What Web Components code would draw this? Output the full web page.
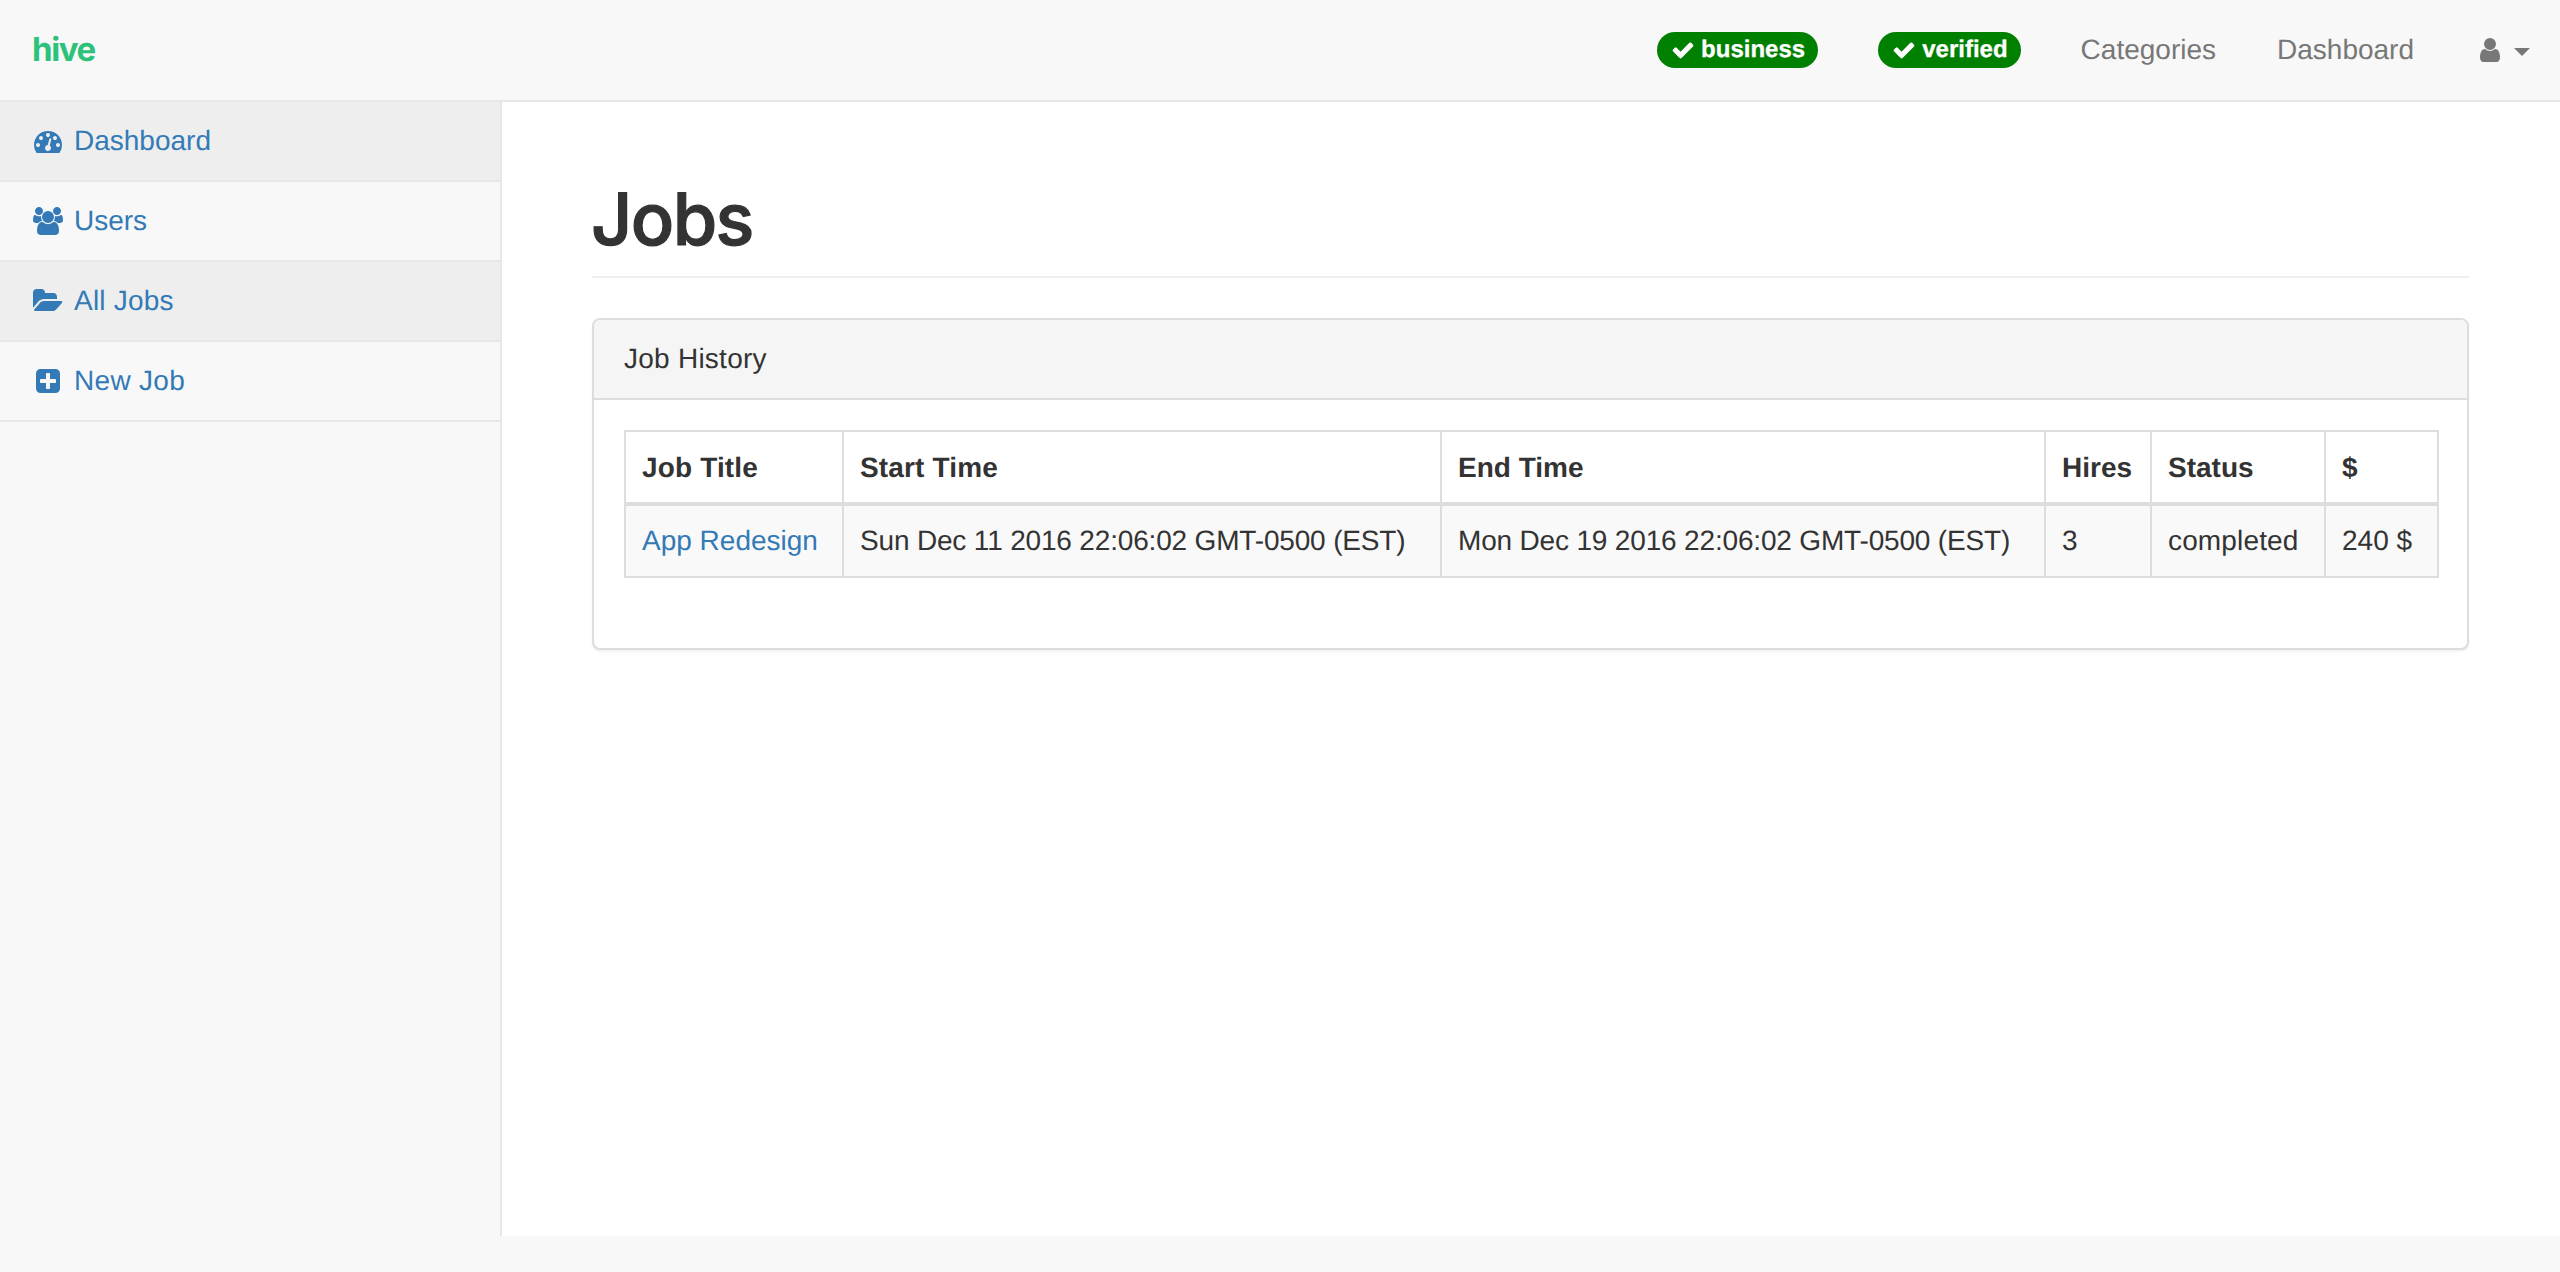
<!DOCTYPE html>
<html lang="en"><head><meta charset="utf-8"><title>Jobs</title>
<style>
html,body{margin:0;padding:0;background:#f8f8f8;font:28px/40px "Liberation Sans",Arial,sans-serif;color:#333;text-rendering:geometricPrecision}
</style></head><body>
<hive-app></hive-app>
<script>
const ICONS={
check:['0 0 1792 1792','M1671 566q0 40-28 68l-724 724-136 136q-28 28-68 28t-68-28l-136-136-362-362q-28-28-28-68t28-68l136-136q28-28 68-28t68 28l294 295 656-657q28-28 68-28t68 28l136 136q28 28 28 68z'],
user:['0 0 1792 1792','M1536 1399q0 109-62.5 187t-150.5 78h-854q-88 0-150.5-78t-62.5-187q0-85 8.5-160.5t31.5-152 58.5-131 94-89 134.5-34.5q131 128 313 128t313-128q76 0 134.5 34.5t94 89 58.5 131 31.5 152 8.5 160.5zm-256-887q0 159-112.5 271.5t-271.5 112.5-271.5-112.5-112.5-271.5 112.5-271.5 271.5-112.5 271.5 112.5 112.5 271.5z'],
dashboard:['0 0 1792 1792','M384 1152q0-53-37.5-90.5t-90.5-37.5-90.5 37.5-37.5 90.5 37.5 90.5 90.5 37.5 90.5-37.5 37.5-90.5zm192-448q0-53-37.5-90.5t-90.5-37.5-90.5 37.5-37.5 90.5 37.5 90.5 90.5 37.5 90.5-37.5 37.5-90.5zm428 481l101-382q6-26-7.5-48.5t-38.5-29.5-48 6.5-30 39.5l-101 382q-60 5-107 43.5t-63 98.5q-20 77 20 146t117 89 146-20 89-117q16-60-6-117t-72-91zm660-33q0-53-37.5-90.5t-90.5-37.5-90.5 37.5-37.5 90.5 37.5 90.5 90.5 37.5 90.5-37.5 37.5-90.5zm-640-640q0-53-37.5-90.5t-90.5-37.5-90.5 37.5-37.5 90.5 37.5 90.5 90.5 37.5 90.5-37.5 37.5-90.5zm448 192q0-53-37.5-90.5t-90.5-37.5-90.5 37.5-37.5 90.5 37.5 90.5 90.5 37.5 90.5-37.5 37.5-90.5zm320 448q0 261-141 483-19 29-54 29h-1402q-35 0-54-29-141-221-141-483 0-182 71-348t191-286 286-191 348-71 348 71 286 191 191 286 71 348z'],
users:['0 0 1920 1792','M593 896q-162 5-265 128h-134q-82 0-138-40.5t-56-118.5q0-353 124-353 6 0 43.5 21t97.5 42.5 119 21.5q67 0 133-23-5 37-5 66 0 139 81 256zm1071 637q0 120-73 189.5t-194 69.5h-874q-121 0-194-69.5t-73-189.5q0-53 3.5-103.5t14-109 26.5-108.5 43-97.5 62-81 85.5-53.5 111.5-20q10 0 43 21.5t73 48 107 48 135 21.5 135-21.5 107-48 73-48 43-21.5q61 0 111.5 20t85.5 53.5 62 81 43 97.5 26.5 108.5 14 109 3.5 103.5zm-1024-1277q0 106-75 181t-181 75-181-75-75-181 75-181 181-75 181 75 75 181zm704 384q0 159-112.5 271.5t-271.5 112.5-271.5-112.5-112.5-271.5 112.5-271.5 271.5-112.5 271.5 112.5 112.5 271.5zm576 225q0 78-56 118.5t-138 40.5h-134q-103-123-265-128 81-117 81-256 0-29-5-66 66 23 133 23 59 0 119-21.5t97.5-42.5 43.5-21q124 0 124 353zm-128-609q0 106-75 181t-181 75-181-75-75-181 75-181 181-75 181 75 75 181z'],
folder:['0 0 1920 1792','M1879 952q0 31-31 66l-336 396q-43 51-120.5 86.5t-143.5 35.5h-1088q-34 0-60.5-13t-26.5-43q0-31 31-66l336-396q43-51 120.5-86.5t143.5-35.5h1088q34 0 60.5 13t26.5 43zm-343-344v160h-832q-94 0-197 47.5t-164 119.5l-337 396-5 6q0-4-.5-12.5t-.5-12.5v-960q0-92 66-158t158-66h320q92 0 158 66t66 158v32h544q92 0 158 66t66 158z'],
plus:['0 0 1792 1792','M1408 960v-128q0-26-19-45t-45-19h-320v-320q0-26-19-45t-45-19h-128q-26 0-45 19t-19 45v320h-320q-26 0-45 19t-19 45v128q0 26 19 45t45 19h320v320q0 26 19 45t45 19h128q26 0 45-19t19-45v-320h320q26 0 45-19t19-45zm256-544v960q0 119-84.5 203.5t-203.5 84.5h-960q-119 0-203.5-84.5t-84.5-203.5v-960q0-119 84.5-203.5t203.5-84.5h960q119 0 203.5 84.5t84.5 203.5z']
};
function def(name,css,html){
  customElements.define(name,class extends HTMLElement{
    connectedCallback(){
      if(this.shadowRoot)return;
      const r=this.attachShadow({mode:'open'});
      const h=typeof html==='function'?html(this):html;
      r.innerHTML='<style>'+css+'</style>'+h;
    }
  });
}
def('fa-icon',':host{display:block;height:1em;line-height:0}svg{display:block;height:1em;width:auto;fill:currentColor}',
 el=>{const [vb,d]=ICONS[el.getAttribute('name')];return `<svg viewBox="${vb}" aria-hidden="true"><path d="${d}"/></svg>`});
def('status-badge',':host{display:inline-flex;align-items:center;height:36px;box-sizing:border-box;padding:0 13px 0 13.5px;border-radius:18px;background:#008000;color:#fff;font:bold 24px/36px "Liberation Sans",Arial,sans-serif;gap:6.6px;-webkit-text-stroke:.3px #fff}fa-icon{font-size:24px;-webkit-text-stroke:0}',
 '<fa-icon name="check"></fa-icon><slot></slot>');
def('top-link',':host{display:block;color:#777;font-size:28px;line-height:40px}','<slot></slot>');
def('hive-logo',':host{display:block;color:#2dc27b;font:700 33px/40px Inter,Lato,sans-serif;letter-spacing:-1.4px;padding-bottom:2px}','<slot></slot>');
def('user-menu',':host{display:flex;align-items:center;color:#777;gap:10px;margin-left:2px}fa-icon{font-size:28px}i{display:block;width:0;height:0;border-top:8px solid #777;border-left:8px solid transparent;border-right:8px solid transparent;margin-top:3px}',
 '<fa-icon name="user"></fa-icon><i></i>');
def('top-bar',':host{display:flex;align-items:center;box-sizing:border-box;height:102px;padding:0 30px 0 32px;background:#f8f8f8;border-bottom:2px solid #e7e7e7}.r{margin-left:auto;display:flex;align-items:center;gap:60px}',
 '<slot name="brand"></slot><div class="r"><slot></slot></div>');
def('side-item',':host{display:flex;align-items:center;box-sizing:border-box;height:80px;padding:0 0 0 30px;border-bottom:2px solid #e7e7e7;color:#337ab7}:host([active]){background:#eee}.i{width:36px;display:flex;justify-content:center;margin-right:8px}fa-icon{font-size:28px}',
 el=>`<span class="i"><fa-icon name="${el.getAttribute('icon')}"></fa-icon></span><slot></slot>`);
def('side-bar',':host{display:block;box-sizing:border-box;width:502px;flex:none;border-right:2px solid #e7e7e7;background:#f8f8f8}','<slot></slot>');
def('page-title',':host{display:block;padding-bottom:18px;border-bottom:2px solid #eee;margin-bottom:40px}h1{margin:0 0 0 -1px;font:500 72px/77px Inter,"Liberation Sans",Arial,sans-serif;color:#333;letter-spacing:-1.6px;-webkit-text-stroke:1.2px #333}','<h1><slot></slot></h1>');
def('info-panel',':host{display:block;border:2px solid #ddd;border-radius:8px;background:#fff;box-shadow:0 2px 2px rgba(0,0,0,.05)}.h{box-sizing:border-box;height:80px;padding:19px 30px;background:#f5f5f5;border-bottom:2px solid #ddd;border-radius:6px 6px 0 0;color:#333;letter-spacing:.25px}.b{padding:30px 30px 70px}',
 el=>`<div class="h">${el.getAttribute('heading')}</div><div class="b"><slot></slot></div>`);
def('jobs-table',`:host{display:block}
table{border-collapse:collapse;table-layout:fixed;width:1813px;color:#333;font:28px/40px "Liberation Sans",Arial,sans-serif}
th,td{border:2px solid #ddd;padding:15px 16px;text-align:left;white-space:nowrap;overflow:hidden}
th{font-weight:bold;border-bottom-width:4px;padding-top:16px;padding-bottom:14px}
tbody tr{background:#f9f9f9}a{color:#337ab7;text-decoration:none}.d{letter-spacing:-.17px}.c{letter-spacing:.15px}.t{letter-spacing:.15px}`,
`<table><colgroup><col style="width:218px"><col style="width:598px"><col style="width:604px"><col style="width:106px"><col style="width:174px"><col style="width:113px"></colgroup>
<thead><tr><th class="t">Job Title</th><th class="t">Start Time</th><th>End Time</th><th>Hires</th><th>Status</th><th>$</th></tr></thead>
<tbody><tr><td><a href="#">App Redesign</a></td><td class="d">Sun Dec 11 2016 22:06:02 GMT-0500 (EST)</td><td class="d">Mon Dec 19 2016 22:06:02 GMT-0500 (EST)</td><td>3</td><td class="c">completed</td><td>240 $</td></tr></tbody></table>`);
def('hive-app',':host{display:block}.w{display:flex;height:1134px}main{flex:1;min-width:0;background:#fff;padding:79px 91px 0 90px}',
`<top-bar><hive-logo slot="brand">hive</hive-logo>
<status-badge>business</status-badge><status-badge>verified</status-badge><top-link>Categories</top-link><top-link style="margin-left:1px">Dashboard</top-link><user-menu></user-menu></top-bar>
<div class="w"><side-bar><side-item icon="dashboard" active>Dashboard</side-item><side-item icon="users">Users</side-item><side-item icon="folder" active style="letter-spacing:.2px">All Jobs</side-item><side-item icon="plus" style="letter-spacing:.3px">New Job</side-item></side-bar>
<main><page-title>Jobs</page-title><info-panel heading="Job History"><jobs-table></jobs-table></info-panel></main></div>`);
</script>
</body></html>
